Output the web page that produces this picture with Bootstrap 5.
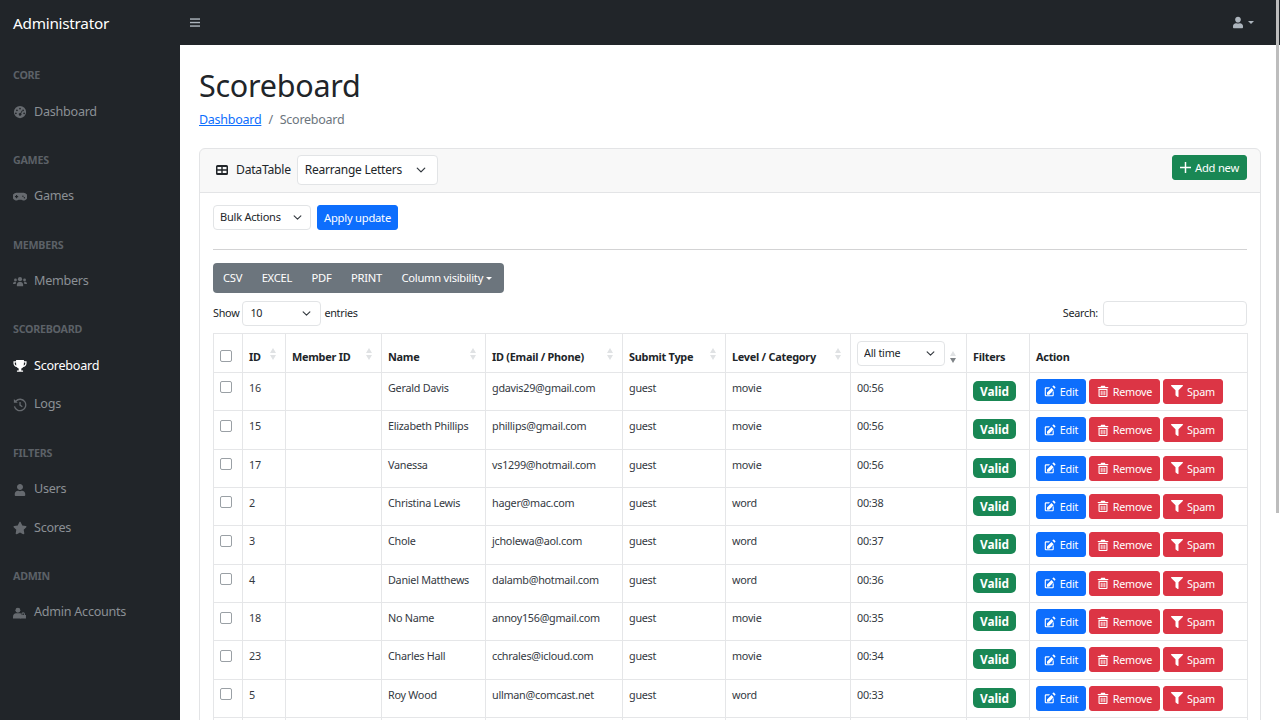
<!DOCTYPE html>
<html lang="en"><head><meta charset="utf-8"><title>Scoreboard</title>
<link href="https://cdn.jsdelivr.net/npm/bootstrap@5.3.0/dist/css/bootstrap.min.css" rel="stylesheet">
<style>
html,body{height:720px;overflow:hidden}
body{font-family:"Noto Sans",sans-serif;font-size:13px;color:#212529;letter-spacing:-.02em}
.topbar{height:45px;padding:0}
.brandname{font-size:15.3px;color:#fff;width:180px;padding:2px 0 0 13px;margin:0}
.burger{width:10px;height:11px;fill:#adb5bd;margin-left:10px}
.usermenu{color:#adb5bd;margin-right:26px}
.usermenu svg{width:10px;height:13px;fill:#adb5bd}
.usercaret{display:inline-block;margin-left:5px;border-top:3px solid #adb5bd;border-left:3px solid transparent;border-right:3px solid transparent}
.shell{height:675px}
.sideb{width:180px;flex:none;background:#212529;padding-top:13px}
.secthead{height:34.4px;line-height:34.4px;padding-left:13px;font-size:10.7px;font-weight:700;color:#5c6167;text-transform:uppercase}
.sideitem{height:38.4px;padding:1px 13px 0;color:#8b9095;font-size:12.6px;gap:7px}
.sideitem.curr{color:#fff}
.sideitem svg{width:14px;height:14px;fill:currentColor;opacity:.65;flex:none}
.sideitem svg.smico{height:12px}
.sideitem.curr svg{opacity:1}
.sectgap{margin-bottom:12px}
.mainarea{flex:1;min-width:0;padding:0 19px;overflow:hidden}
.pagetitle{font-size:30.5px;font-weight:400;margin:21px 0 7px;line-height:38px}
.crumbs{font-size:12.5px;margin-bottom:18px;gap:7px}
.crumbs a{color:#0d6efd}
.tablecard{font-size:11.5px;width:1062px;--bs-card-border-color:#e3e4e6}
.tablecard .form-select,.tablecard .form-control{border-radius:4px;border-color:#e2e4e6}
.cardtop{height:44px;padding:0 13px 0 16px;font-size:12.2px}
.cardtop .tblico{width:12px;height:12px;fill:#212529;margin-right:8px}
.pick{font-size:12px;padding:4px 30px 4px 7px;height:30px;width:141px;margin-left:6px;background-position:right 9px center;background-size:14px 10px;letter-spacing:-.02em}
.addbtn{font-size:11.2px;padding:0;width:75px;height:25px;line-height:23px;background:#198754;letter-spacing:-.02em;display:flex;align-items:center;justify-content:center;margin-bottom:6px;--bs-btn-border-radius:3px}
.addbtn svg{width:11px;height:11px;fill:#fff;margin-right:4px}
.cardinner{padding:12px 13px 13px}
.bulk{font-size:11px;width:98px;height:25px;padding:2px 20px 2px 6px;background-position:right 6px center;background-size:13px 9px;letter-spacing:-.02em}
.applybtn{font-size:11.2px;height:25px;width:81px;padding:0;line-height:23px;margin-left:6px;letter-spacing:-.02em;--bs-btn-border-radius:3px}
.sep{margin:19px 0 13px;opacity:.2}
.exportgroup{background:#6c757d;border-radius:4px;height:30px;padding:1px 10px 0;width:291px;color:#fff;font-size:11.2px;gap:19.500px;margin-bottom:8px;white-space:nowrap}
.caretish{display:inline-block;border-top:3px solid #fff;border-left:3px solid transparent;border-right:3px solid transparent;margin-left:3px;vertical-align:2px}
.lenrow{height:25px;font-size:10.8px;margin-bottom:7px}
.lenpick{font-size:10.8px;width:79px;height:25px;padding:2px 7px;margin:0 3px;background-position:right 7px center;background-size:13px 9px;letter-spacing:-.02em}
.searchbox{width:144px;height:25px;margin-left:5px;padding:2px 6px;font-size:10.8px}
.datatbl{table-layout:fixed;width:1034px;font-size:10.8px;margin:0;border-color:#e5e6e8}
.datatbl th{font-weight:700;height:39px;vertical-align:bottom;padding:0 6px 6px;position:relative;font-size:10.9px}
.datatbl td{height:38.4px;padding:7px 6px 0;vertical-align:top;color:#34393f}
.datatbl .form-check-input{width:12px;height:12px;margin:1.500px 0 0;border-color:#9aa0a5;border-radius:2px;display:block}
.datatbl th .form-check-input{margin:0 0 4px}
.arrs{position:absolute;right:9px;top:14px;width:6px;height:12px}
.arrs::before,.arrs::after{content:"";position:absolute;left:0;border-left:3px solid transparent;border-right:3px solid transparent}
.arrs::before{top:0;border-bottom:5px solid #e0e2e4}
.arrs::after{bottom:0;border-top:5px solid #e0e2e4}
.arrs.dark::after{border-top-color:#7f8387}
.arrs.dark{right:10px;top:17px}
.timesel{position:absolute;left:6px;top:7px;width:88px;height:25px;padding:2px 6px;font-size:10.8px;font-weight:400;background-position:right 7px center;background-size:13px 9px;letter-spacing:-.02em}
.validtag{font-size:11.8px;padding:3px 0;width:43px;height:20px;line-height:14px;border-radius:5px;display:block;text-align:center;letter-spacing:0;margin-top:1px}
.rowbtns{gap:3px;margin-top:-1px}
.actbtn{font-size:10.8px;height:25px;padding:0;line-height:23px;white-space:nowrap;display:flex;align-items:center;justify-content:center;gap:4px;--bs-btn-border-radius:3px;letter-spacing:-.02em}
.actbtn svg{width:12px;height:12px;fill:#fff;flex:none}
.w-edit{width:50px}.w-remove{width:71px}.w-spam{width:60px}
.scrollthumb{position:fixed;top:0;right:1px;width:3px;height:513px;background:#bdbdbd}
</style></head><body>
<svg width="0" height="0" class="d-none"><defs>
<symbol id="i-tach" viewBox="0 0 16 16"><path fill-rule="evenodd" d="M8 1a7 7 0 1 0 0 14A7 7 0 0 0 8 1zm0 2a1 1 0 1 1 0 2 1 1 0 0 1 0-2zM4.500 5a1 1 0 1 1 0 2 1 1 0 0 1 0-2zm7 0a1 1 0 1 1 0 2 1 1 0 0 1 0-2zM3.300 8.500a1 1 0 1 1 0 2 1 1 0 0 1 0-2zm9.400 0a1 1 0 1 1 0 2 1 1 0 0 1 0-2zM8 9a1.600 1.600 0 0 1 .5.1l2-3.400.8.500-2 3.300A1.600 1.600 0 1 1 8 9z"/></symbol>
<symbol id="i-game" viewBox="0 0 20 14"><path fill-rule="evenodd" d="M5 1h10a5.500 5.500 0 1 1-3 10H8A5.500 5.500 0 1 1 5 1zm-.7 3v1.600H2.800v1.600h1.500v1.600h1.600V7.200h1.500V5.600H5.900V4zm9.900 1a1 1 0 1 0 0 2 1 1 0 0 0 0-2zm2 2a1 1 0 1 0 0 2 1 1 0 0 0 0-2z"/></symbol>
<symbol id="i-users" viewBox="0 0 20 16"><circle cx="10" cy="4" r="3"/><circle cx="3.500" cy="5" r="2"/><circle cx="16.500" cy="5" r="2"/><path d="M5.500 14v-2c0-2.400 2-4 3-4h3c1 0 3 1.600 3 4v2zM0 11c0-2 1-3.500 2-3.500h2.500C4 8.500 3.800 10 3.800 11zM20 11c0-2-1-3.500-2-3.500h-2.500c.5 1 .7 2.500.7 3.500z"/></symbol>
<symbol id="i-trophy" viewBox="0 0 16 16"><path fill-rule="evenodd" d="M3.500 1h9v1.500h3V5c0 2.300-2.200 3.800-3.700 4-.7 1-1.500 1.500-2.300 1.800V13h2v1.500h-7V13h2v-2.200C5.700 10.500 4.900 10 4.200 9 2.700 8.800.5 7.300.5 5V2.500h3zM2 4v1c0 1 .8 2 1.800 2.400-.2-1-.3-2.200-.3-3.400zm12 0h-1.500c0 1.200-.1 2.400-.3 3.400C13.200 7 14 6 14 5z"/></symbol>
<symbol id="i-hist" viewBox="0 0 16 16"><path d="M2.800 2.800A7.300 7.300 0 1 1 .9 9.700l1.500-.4A5.800 5.800 0 1 0 3.900 3.900L5.500 5.500H1V1zM7.300 4.500h1.500v3.300l2.300 1.600-.9 1.200-2.900-2.100z"/></symbol>
<symbol id="i-user" viewBox="0 0 448 512"><path d="M224 256c70.700 0 128-57.300 128-128S294.700 0 224 0 96 57.300 96 128s57.300 128 128 128zm89.600 32h-16.700c-22.200 10.200-46.900 16-72.900 16s-50.600-5.800-72.900-16h-16.700C60.200 288 0 348.200 0 422.400V464c0 26.500 21.500 48 48 48h352c26.500 0 48-21.500 48-48v-41.600c0-74.200-60.200-134.400-134.400-134.400z"/></symbol>
<symbol id="i-star" viewBox="0 0 576 512"><path d="M259.300 17.800L194 150.200 47.900 171.500c-26.200 3.800-36.700 36.100-17.700 54.600l105.700 103-25 145.500c-4.500 26.300 23.200 46 46.400 33.700L288 439.600l130.700 68.700c23.200 12.200 50.900-7.400 46.400-33.700l-25-145.500 105.700-103c19-18.500 8.500-50.800-17.700-54.600L382 150.200 316.700 17.800c-11.700-23.600-45.600-23.900-57.400 0z"/></symbol>
<symbol id="i-admin" viewBox="0 0 20 16"><circle cx="7" cy="4" r="3.500"/><path d="M0 16v-2.500C0 10.500 2 8.500 4.500 8.500h5c.8 0 1.500.2 2 .5v7z"/><path fill-rule="evenodd" d="M14.500 7a2.500 2.500 0 0 1 2.500 2.500V11h1.500v5H10.500v-5H12V9.500A2.500 2.500 0 0 1 14.500 7zm0 1.400a1 1 0 0 0-1 1V11h2V9.400a1 1 0 0 0-1-1z"/></symbol>
<symbol id="i-edit" viewBox="0 0 16 16"><path d="M13.500 1l1.500 1.500a1 1 0 0 1 0 1.400l-1 1-2.900-2.900 1-1a1 1 0 0 1 1.400 0zM10 4.100L12.900 7l-6 6H4v-2.900z"/><path d="M2.500 3H8L6.500 4.500H3a.5.500 0 0 0-.5.500v8a.5.500 0 0 0 .5.500h8a.5.500 0 0 0 .5-.5V9.500L13 8v5.500A1.500 1.500 0 0 1 11.500 15h-9A1.500 1.500 0 0 1 1 13.500v-9A1.500 1.500 0 0 1 2.500 3z"/></symbol>
<symbol id="i-trash" viewBox="0 0 16 16"><path fill-rule="evenodd" d="M5.500 1h5l.8 1.500H15V4H1V2.500h3.700zM2 5h12v9.500A1.500 1.500 0 0 1 12.500 16h-9A1.500 1.500 0 0 1 2 14.500zm1.500 1.500v8h9v-8zM5 7.500h1.200V13.500H5zm2.400 0h1.200V13.500H7.400zm2.400 0H11V13.500H9.800z"/></symbol>
<symbol id="i-filter" viewBox="0 0 512 512"><path d="M487.976 0H24.028C2.710 0-8.047 25.866 7.058 40.971L192 225.941V432c0 7.831 3.821 15.170 10.237 19.662l80 55.980C298.020 518.690 320 507.493 320 487.980V225.941l184.947-184.970C520.021 25.896 509.338 0 487.976 0z"/></symbol>
</defs></svg>
<nav class="navbar navbar-dark bg-dark topbar d-flex flex-nowrap justify-content-start">
<span class="brandname">Administrator</span>
<svg class="burger" viewBox="0 0 12 12"><rect y="1" width="12" height="1.700"/><rect y="5.200" width="12" height="1.700"/><rect y="9.400" width="12" height="1.700"/></svg>
<div class="ms-auto usermenu d-flex align-items-center"><svg><use href="#i-user"/></svg><span class="usercaret"></span></div>
</nav>
<div class="d-flex shell">
<aside class="sideb">
<div class="secthead">Core</div>
<a class="sideitem d-flex align-items-center text-decoration-none sectgap"><svg><use href="#i-tach"/></svg>Dashboard</a>
<div class="secthead">Games</div>
<a class="sideitem d-flex align-items-center text-decoration-none sectgap"><svg><use href="#i-game"/></svg>Games</a>
<div class="secthead">Members</div>
<a class="sideitem d-flex align-items-center text-decoration-none sectgap"><svg><use href="#i-users"/></svg>Members</a>
<div class="secthead">Scoreboard</div>
<a class="sideitem curr d-flex align-items-center text-decoration-none"><svg><use href="#i-trophy"/></svg>Scoreboard</a>
<a class="sideitem d-flex align-items-center text-decoration-none sectgap"><svg><use href="#i-hist"/></svg>Logs</a>
<div class="secthead">Filters</div>
<a class="sideitem d-flex align-items-center text-decoration-none"><svg class="smico"><use href="#i-user"/></svg>Users</a>
<a class="sideitem d-flex align-items-center text-decoration-none sectgap"><svg><use href="#i-star"/></svg>Scores</a>
<div class="secthead">Admin</div>
<a class="sideitem d-flex align-items-center text-decoration-none"><svg><use href="#i-admin"/></svg>Admin Accounts</a>
</aside>
<main class="mainarea">
<h1 class="pagetitle">Scoreboard</h1>
<div class="crumbs d-flex"><a href="#">Dashboard</a><span class="text-secondary">/</span><span class="text-secondary">Scoreboard</span></div>
<div class="card tablecard">
<div class="card-header cardtop d-flex align-items-center">
<svg class="tblico" viewBox="0 0 12 12"><path fill-rule="evenodd" d="M1.500 1h9A1.500 1.500 0 0 1 12 2.500v7A1.500 1.500 0 0 1 10.500 11h-9A1.500 1.500 0 0 1 0 9.500v-7A1.500 1.500 0 0 1 1.500 1zm0 2v2.300h3.800V3zm5.200 0v2.300h3.800V3zM1.500 6.700V9h3.800V6.700zm5.200 0V9h3.800V6.700z"/></svg>
<span>DataTable</span>
<select class="form-select pick"><option>Rearrange Letters</option></select>
<a class="btn btn-success addbtn ms-auto"><svg viewBox="0 0 12 12"><path d="M5.200 0h1.600v5.200H12v1.600H6.800V12H5.200V6.800H0V5.200h5.200z"/></svg>Add new</a>
</div>
<div class="card-body cardinner">
<div class="d-flex"><select class="form-select bulk"><option>Bulk Actions</option></select><button class="btn btn-primary applybtn">Apply update</button></div>
<hr class="sep">
<div class="exportgroup d-flex align-items-center"><span>CSV</span><span>EXCEL</span><span>PDF</span><span>PRINT</span><span>Column visibility<i class="caretish"></i></span></div>
<div class="lenrow d-flex align-items-center"><span>Show</span><select class="form-select lenpick"><option>10</option></select><span>entries</span><span class="ms-auto">Search:</span><input class="form-control searchbox"></div>
<table class="table table-bordered datatbl">
<colgroup><col style="width:29px"><col style="width:43px"><col style="width:96px"><col style="width:104px"><col style="width:137px"><col style="width:103px"><col style="width:125px"><col style="width:116px"><col style="width:63px"><col style="width:218px"></colgroup>
<thead><tr>
<th><input type="checkbox" class="form-check-input"></th>
<th>ID<i class="arrs"></i></th><th>Member ID<i class="arrs"></i></th><th>Name<i class="arrs"></i></th><th>ID (Email / Phone)<i class="arrs"></i></th><th>Submit Type<i class="arrs"></i></th><th>Level / Category<i class="arrs"></i></th>
<th><select class="form-select timesel"><option>All time</option></select><i class="arrs dark"></i></th><th>Filters</th><th>Action</th>
</tr></thead>
<tbody id="rows"></tbody>
</table>
</div></div>
</main>
</div>
<div class="scrollthumb"></div>
<script src="https://cdn.jsdelivr.net/npm/bootstrap@5.3.0/dist/js/bootstrap.bundle.min.js"></script>
<script>
const data=[["16","Gerald Davis","gdavis29@gmail.com","movie","00:56"],["15","Elizabeth Phillips","phillips@gmail.com","movie","00:56"],["17","Vanessa","vs1299@hotmail.com","movie","00:56"],["2","Christina Lewis","hager@mac.com","word","00:38"],["3","Chole","jcholewa@aol.com","word","00:37"],["4","Daniel Matthews","dalamb@hotmail.com","word","00:36"],["18","No Name","annoy156@gmail.com","movie","00:35"],["23","Charles Hall","cchrales@icloud.com","movie","00:34"],["5","Roy Wood","ullman@comcast.net","word","00:33"]];
document.getElementById("rows").innerHTML=data.map(r=>`<tr><td><input type="checkbox" class="form-check-input"></td><td>${r[0]}</td><td></td><td>${r[1]}</td><td>${r[2]}</td><td>guest</td><td>${r[3]}</td><td>${r[4]}</td><td><span class="badge text-bg-success validtag">Valid</span></td><td><div class="d-flex rowbtns"><a class="btn btn-primary actbtn w-edit"><svg><use href="#i-edit"/></svg>Edit</a><a class="btn btn-danger actbtn w-remove"><svg><use href="#i-trash"/></svg>Remove</a><a class="btn btn-danger actbtn w-spam"><svg><use href="#i-filter"/></svg>Spam</a></div></td></tr>`).join("")+`<tr>${"<td></td>".repeat(10)}</tr>`;
</script>
</body></html>
